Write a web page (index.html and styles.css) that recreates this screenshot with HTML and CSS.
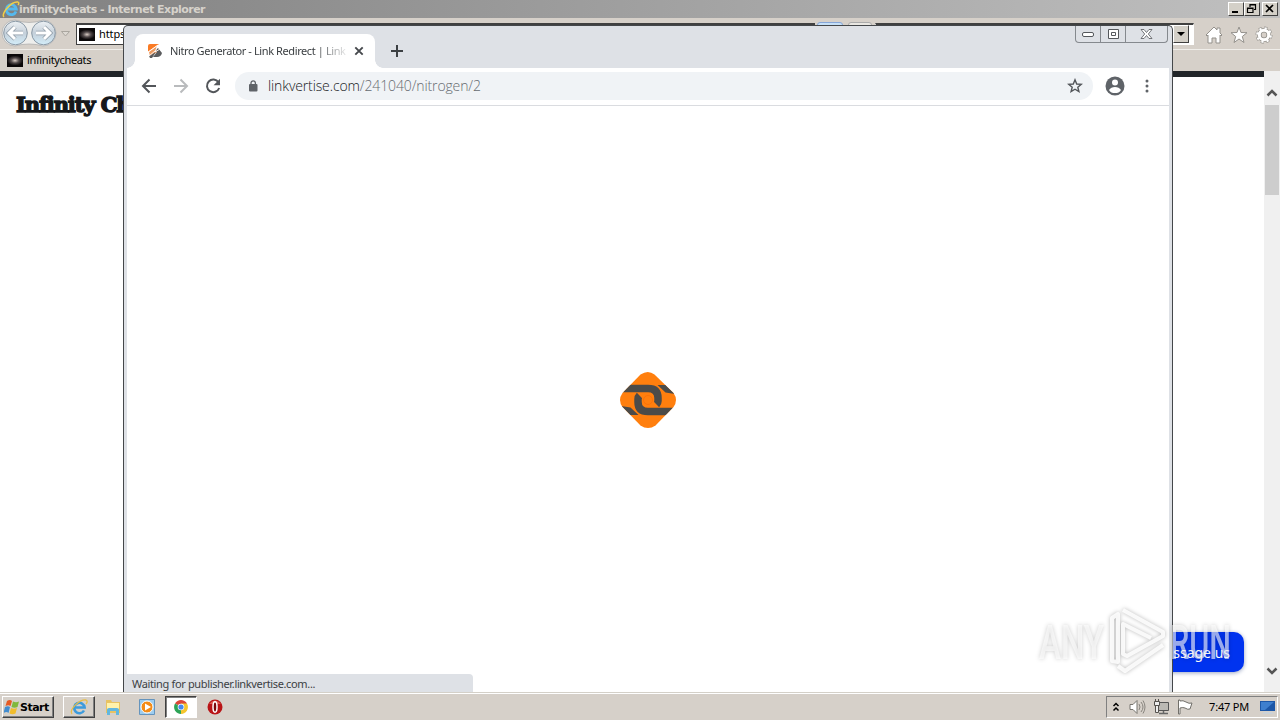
FILE: index.html
```
<!DOCTYPE html>
<html lang="en">
<head>
    <meta charset="utf-8">
    <title>Desktop</title>
    <link rel="stylesheet" href="styles.css">
</head>
<body>
    <div class="desktop">
        <!-- Internet Explorer -->
        <div class="ie">
            <div class="ie-title">
                <svg class="ie-logo" width="18" height="18" viewBox="0 0 18 18">
                    <path d="M14 11.500A5 5 0 1 1 14.300 9H5.500" fill="none" stroke="#55b9ee" stroke-width="2.800"/>
                    <path d="M2 17C-1 14 9 1 16 2c1 0 1 2 0 3" fill="none" stroke="#f3cf45" stroke-width="1.500"/>
                </svg>
                <span class="ie-title-text">infinitycheats - Internet Explorer</span>
                <div class="ie-controls">
                    <span class="win-btn"><svg width="14" height="12"><path d="M3 9h6" stroke="#000" stroke-width="2"/></svg></span>
                    <span class="win-btn"><svg width="14" height="12"><path d="M5 4V1.500h5.500v5H9M5 2h5.500M2.500 5h5.500v4.500H2.500zM2.500 5.500h5.500" fill="none" stroke="#000" stroke-width="1.200"/></svg></span>
                    <span class="win-btn close"><svg width="14" height="12"><path d="M3 2l7 7m0-7l-7 7" stroke="#000" stroke-width="1.700"/></svg></span>
                </div>
            </div>
            <div class="ie-nav">
                <svg width="74" height="30" viewBox="0 0 74 30">
                    <defs>
                        <linearGradient id="orb" x1="0" y1="0" x2="0" y2="1">
                            <stop offset="0" stop-color="#edf1f4"/>
                            <stop offset=".5" stop-color="#c5d0da"/>
                            <stop offset="1" stop-color="#d3edf9"/>
                        </linearGradient>
                    </defs>
                    <path d="M15 2q14 5 28 0a13 13 0 0 1 0 26q-14-4-28 0a13 13 0 0 1 0-26" fill="#eeeeec" stroke="#aaa" stroke-width=".7"/>
                    <circle cx="15.500" cy="15" r="11.800" fill="url(#orb)" stroke="#8998a5"/>
                    <circle cx="43.500" cy="15" r="11.800" fill="url(#orb)" stroke="#8998a5"/>
                    <path d="M23 15H9m6-6l-6 6 6 6M36 15h14m-6-6l6 6-6 6" fill="none" stroke="#8e9ba6" stroke-width="4.500"/>
                    <path d="M23 15H9m6-6l-6 6 6 6M36 15h14m-6-6l6 6-6 6" fill="none" stroke="#fff" stroke-width="3"/>
                    <path d="M61.500 13.500h8l-4 4.500z" fill="#ddd9d3" stroke="#aaa69f"/>
                </svg>
                <div class="ie-address">
                    <span class="galaxy"></span>
                    <span class="ie-url">https:</span>
                </div>
                <div class="ie-stubs"><i class="blue"></i><i></i></div>
                <div class="ie-search"><span class="drop"><svg width="12" height="12"><path d="M2 4h8L6 8z"/></svg></span></div>
                <div class="ie-tools">
                    <svg width="18" height="18" viewBox="0 0 18 18"><path d="M1 9l8-8 3 3V2h3v5l2 2-1 1-1-1v8h-4v-5H7v5H3V9l-1 1z" fill="#fff" stroke="#94918c"/></svg>
                    <svg width="18" height="18" viewBox="0 0 18 18"><path d="M9 1l2 5.500 6 .2-4.700 3.800 1.700 6L9 13l-5 3.500 1.700-6L1 6.700l6-.2z" fill="#fff" stroke="#94918c"/></svg>
                    <svg width="18" height="18" viewBox="0 0 18 18">
                        <circle cx="9" cy="9" r="6.800" fill="none" stroke="#94918c" stroke-width="3.400" stroke-dasharray="3 2.340"/>
                        <circle cx="9" cy="9" r="4.700" fill="none" stroke="#94918c" stroke-width="4.500"/>
                        <circle cx="9" cy="9" r="6.800" fill="none" stroke="#fff" stroke-width="2.200" stroke-dasharray="2.200 3.140" stroke-dashoffset="-.4"/>
                        <circle cx="9" cy="9" r="4.700" fill="none" stroke="#fff" stroke-width="3"/>
                    </svg>
                </div>
            </div>
            <div class="ie-tabs">
                <span class="galaxy"></span>
                <span class="ie-tab-text">infinitycheats</span>
            </div>
            <div class="ie-body">
                <div class="ie-page"><h1>Infinity Cheats</h1></div>
                <div class="scrollbar">
                    <svg width="16" height="34" viewBox="0 0 16 34"><path d="M3.500 24.500L8 20l4.500 4.500" fill="none" stroke="#555" stroke-width="2.500"/></svg>
                    <div class="thumb"></div>
                    <svg class="down" width="16" height="34" viewBox="0 0 16 34"><path d="M3.500 10.500L8 15l4.500-4.500" fill="none" stroke="#555" stroke-width="2.500"/></svg>
                </div>
            </div>
            <div class="message-btn">Message us</div>
        </div>

        <!-- Chrome -->
        <div class="chrome">
            <div class="tab-strip">
                <div class="tab">
                    <svg width="16" height="16" viewBox="0 0 16 16">
                        <path d="M1 3q0-2 2-2h9L1 9z" fill="#fa7b24"/>
                        <path d="M2 9l8-6-1 5 4-2v2L3 13z" fill="#ed9b61"/>
                        <path d="M9 7l2-2 4 5q-1 4-5 4H6l4-5zM2 13l7-4-4 6H3z" fill="#5b5c5e"/>
                        <path d="M1 9l10-7-3 7 5-3M2 13l6-5" fill="none" stroke="#fff" stroke-width=".9"/>
                    </svg>
                    <span class="tab-title">Nitro Generator - Link Redirect | Link</span>
                    <svg class="tab-close" width="10" height="10" viewBox="0 0 10 10"><path d="M1.300 1.300l7.400 7.400m0-7.400L1.300 8.700" stroke="#45484c" stroke-width="1.900"/></svg>
                </div>
                <svg class="new-tab" width="14" height="14" viewBox="0 0 14 14"><path d="M7 1v12M1 7h12" stroke="#3c4043" stroke-width="2"/></svg>
                <div class="chrome-controls">
                    <span><svg width="14" height="7"><rect x="1.500" y="1.500" width="11" height="4" rx="1.500" fill="#fff" stroke="#55585c"/></svg></span>
                    <span><svg width="13" height="11"><path d="M1.500.5h10v9h-10zM4.500 3.500h4v3h-4z" fill="#fff" stroke="#55585c"/></svg></span>
                    <span class="wide"><svg width="13" height="11"><path d="M1 .5h3l2.500 3L9 .5h3L8.300 5l3.700 4.500H9l-2.500-3-2.500 3H1L4.700 5z" fill="#fff" stroke="#55585c" stroke-width=".8"/></svg></span>
                </div>
            </div>
            <div class="toolbar">
                <svg width="16" height="16" viewBox="0 0 16 16"><path d="M15 8H2m6.500-6.500L2 8l6.500 6.500" fill="none" stroke="#53565a" stroke-width="2"/></svg>
                <svg width="16" height="16" viewBox="0 0 16 16"><path d="M1 8h13M7.500 1.500L14 8l-6.500 6.500" fill="none" stroke="#b9bbbd" stroke-width="2"/></svg>
                <svg width="16" height="16" viewBox="0 0 16 16"><path d="M13.500 4.300A6.300 6.300 0 1 0 14.200 10" fill="none" stroke="#53565a" stroke-width="2"/><path d="M15 .8v6.400H8.600z" fill="#53565a"/></svg>
                <div class="omnibox">
                    <svg width="10" height="12" viewBox="0 0 10 12"><rect x="1" y="4" width="8.500" height="7.500" rx="1" fill="#5f6368"/><path d="M3 5V3a2.200 2.200 0 0 1 4.400 0v2" fill="none" stroke="#5f6368" stroke-width="1.300"/></svg>
                    <span class="url"><b>linkvertise.com</b><i>/241040/nitrogen/2</i></span>
                    <svg class="star" width="16" height="16" viewBox="0 0 16 16"><path d="M8 1.800l1.700 4.200 4.600.3-3.500 2.900 1.100 4.400L8 11.200l-3.900 2.400 1.100-4.400-3.500-2.900L6.300 6z" fill="none" stroke="#53565a" stroke-width="1.400"/></svg>
                </div>
                <svg class="avatar" width="20" height="20" viewBox="0 0 20 20"><circle cx="10" cy="10" r="9.500" fill="#5f6368"/><circle cx="10" cy="6.600" r="3" fill="#fff"/><path d="M4 13.900q2-3 6-3t6 3q-2 3.200-6 3.200t-6-3.200" fill="#fff"/></svg>
                <svg class="menu" width="4" height="16"><circle cx="2" cy="3" r="1.500" fill="#5f6368"/><circle cx="2" cy="8" r="1.500" fill="#5f6368"/><circle cx="2" cy="13" r="1.500" fill="#5f6368"/></svg>
            </div>
            <div class="chrome-page">
                <svg class="loader" width="60" height="60" viewBox="0 0 60 60">
                    <defs>
                        <clipPath id="gem"><path d="M22.500 4.500q7.500-5 14 0l19 18.500q5 7 0 14L37.500 55.500q-7.500 5-15 0L4.500 37q-5-7 0-14z"/></clipPath>
                        <g id="link">
                            <path d="M0 18.500h30q10 0 10 9.500v3q0 2-1.500 3.500" fill="none" stroke="#4b4b49" stroke-width="7.500"/>
                            <path d="M39.500 15h8.500l9 9-9.500-1.500z" fill="#4b4b49"/>
                        </g>
                    </defs>
                    <g clip-path="url(#gem)">
                        <path d="M0 0h60v60H0z" fill="#ff7f0e"/>
                        <use href="#link"/>
                        <use href="#link" transform="rotate(180 30 30)"/>
                        <circle cx="30" cy="30" r="4.500" fill="none" stroke="#f9720a"/>
                    </g>
                </svg>
                <div class="status">Waiting for publisher.linkvertise.com...</div>
            </div>
        </div>

        <svg class="watermark" width="204" height="74" viewBox="0 0 204 74">
            <g fill="#fff" fill-opacity=".6">
                <text x="4" y="56" textLength="65" lengthAdjust="spacingAndGlyphs">ANY</text>
                <text x="135" y="56" textLength="61" lengthAdjust="spacingAndGlyphs">RUN</text>
            </g>
            <path d="M77 58V15l6-4v48zM88 7l40 22v4L92 53l-4-2V21l28 14M83 63l7 5 38-26" fill="none" stroke="#fff" stroke-opacity=".85" stroke-width="4" stroke-linejoin="round"/>
        </svg>

        <div class="taskbar">
            <div class="start">
                <svg width="16" height="16" viewBox="0 0 16 16"><path d="M3 2q3-2 5 0L6.500 7q-2-1.500-5 0z" fill="#e65a24"/><path d="M9 2.500q3 1.500 6 0L13.500 8q-3 1.500-6 0z" fill="#80b83d"/><path d="M1 8q3-1.500 5 0l-1.500 6q-2-2-5 0z" fill="#428ccf"/><path d="M7 9q3 1.500 6 0l-1.500 5.500q-3 1.500-6 0z" fill="#f1bd2d"/></svg>
                <span>Start</span>
            </div>
            <div class="task raised">
                <svg width="20" height="18" viewBox="0 0 20 18"><path d="M15 12.500a5.200 5.200 0 1 1 .6-3H6" fill="none" stroke="#3d9bdc" stroke-width="2.600"/><path d="M3 16C-1 12 11 1 17 2c2 1 1 3 0 4" fill="none" stroke="#e8bd45" stroke-width="1.300"/></svg>
            </div>
            <div class="task">
                <svg width="16" height="16" viewBox="0 0 16 16"><path d="M1 1h5l1 2h8v11H1z" fill="#e8c362"/><path d="M2 4h12v6H2z" fill="#fff2ab"/><path d="M2 16v-5q0-2 2-2h8q2 0 2 2v5h-3v-4H5v4z" fill="#62b7df"/></svg>
            </div>
            <div class="task">
                <svg width="16" height="16" viewBox="0 0 16 16"><path d="M.5.5h15v15H.5z" fill="#9ccdf0" stroke="#6594bd"/><circle cx="8" cy="8" r="6" fill="#f38c18" stroke="#fff"/><path d="M6 4.500l6 3.500-6 3.500z" fill="#fff"/></svg>
            </div>
            <div class="task pressed">
                <svg width="14" height="14" viewBox="0 0 14 14"><path d="M7 7L1 3.500a7 7 0 0 1 12 0z" fill="#dc4638"/><path d="M7 7L1 3.500A7 7 0 0 0 7 14z" fill="#2da457"/><path d="M7 7v7a7 7 0 0 0 6-10.500H7z" fill="#f5c52d"/><circle cx="7" cy="7" r="3.300" fill="#fff"/><circle cx="7" cy="7" r="2.600" fill="#4688ee"/></svg>
            </div>
            <div class="task">
                <svg width="16" height="16" viewBox="0 0 16 16"><circle cx="8" cy="8" r="7.500" fill="#b91417"/><path d="M2 5q6-7 12 0z" fill="#df5850"/><ellipse cx="8" cy="8" rx="2" ry="5.200" fill="#7b080b" stroke="#fff" stroke-width="1.500"/></svg>
            </div>
            <div class="tray">
                <svg width="8" height="10" viewBox="0 0 8 10"><path d="M1.500 4L4 1.500 6.500 4M1.500 8.500L4 6l2.500 2.500" fill="none" stroke="#000" stroke-width="1.500"/></svg>
                <svg class="speaker" width="17" height="16" viewBox="0 0 17 16"><path d="M1 5.500h3l4-4v13l-4-4H1z" fill="#fff" stroke="#77746e"/><path d="M10 5q2 3 0 6M12 3q4 5 0 10M14 1.500q4 6.500 0 13" fill="none" stroke="#88847e"/></svg>
                <svg class="network" width="17" height="16" viewBox="0 0 17 16"><path d="M5.500 3.500h10v8h-10z" fill="#bbb9b4" stroke="#555"/><path d="M6 14.500h9M10.500 12v2" stroke="#666" stroke-width="1.500"/><path d="M1.500 2.500h5v4h-5zM2.500 0v2M5.500 0v2M2.500 7v6.500h3V7" fill="#eee" stroke="#55524e"/></svg>
                <svg class="flag" width="17" height="16" viewBox="0 0 17 16"><path d="M1.500 1v14h1.500V9q3-1 5 0 3 2 5 1l2-6q-3 1-6-1Q6 1 3 2V1z" fill="#fff" stroke="#716f6a"/></svg>
                <span class="clock">7:47 PM</span>
                <svg width="16" height="14" viewBox="0 0 16 14"><path d="M0 1h15v10H0z" fill="#1d57a7"/><path d="M1 2h13l-9 8H1z" fill="#3e7fce"/><path d="M4 12h8l2 2H2z" fill="#cbd2d8"/></svg>
            </div>
        </div>
    </div>
</body>
</html>
```
FILE: styles.css
```
body {
    margin: 0;
    font-family: "Noto Sans", "DejaVu Sans", sans-serif;
    font-size: 11px;
    color: #000;
}
svg {
    display: block;
    flex-shrink: 0;
}
.desktop {
    position: relative;
    width: 1280px;
    height: 720px;
    overflow: hidden;
    display: flex;
    flex-direction: column;
    background: #d4d0c8;
}
/* Internet Explorer window */
.ie {
    position: relative;
    height: 692px;
    display: flex;
    flex-direction: column;
    background: #d6d0c9;
}
.ie-title {
    height: 18px;
    display: flex;
    align-items: center;
    padding: 0 2px;
    background: linear-gradient(to right, #808080, #c0c0c0);
}
.ie-title-text {
    font-family: "DejaVu Sans", sans-serif;
    font-weight: bold;
    font-size: 11px;
    letter-spacing: -0.53px;
    color: #d6d2cb;
    white-space: nowrap;
    margin-left: -1px;
}
.ie-controls {
    display: flex;
    margin-left: auto;
}
.win-btn {
    width: 14px;
    height: 12px;
    border: 1px solid;
    border-color: #fff #404040 #404040 #fff;
    background: #d4d0c8;
    overflow: hidden;
}
.win-btn.close {
    margin-left: 2px;
}
.ie-nav {
    height: 31px;
    display: flex;
    align-items: flex-start;
}
.ie-address {
    box-sizing: border-box;
    width: 739px;
    height: 22px;
    margin: 5px 0 0 2px;
    padding-left: 2px;
    border: 1px solid #404040;
    border-top-width: 2px;
    background: #fff;
    display: flex;
    align-items: center;
}
.galaxy {
    width: 16px;
    height: 13px;
    background: radial-gradient(ellipse 8px 5px at center, #d5c9c1, #51494a 50%, #0b0809 100%);
}
.ie-url {
    margin-left: 4px;
    margin-top: -2px;
    letter-spacing: -0.1px;
}
.ie-stubs {
    display: flex;
    gap: 5px;
    margin: 4px 0 0 2px;
}
.ie-stubs i {
    width: 22px;
    height: 20px;
    border: 1px solid #aaa;
    border-radius: 3px;
    background: #e9e7e2;
}
.ie-stubs .blue {
    width: 24px;
    border-color: #86a6d8;
    background: #c6e0f7;
}
.ie-search {
    box-sizing: border-box;
    width: 319px;
    height: 22px;
    margin: 5px 0 0 3px;
    border: 1px solid #fff;
    border-top: 2px solid #404040;
    background: #fff;
    display: flex;
    justify-content: flex-end;
}
.drop {
    width: 14px;
    height: 16px;
    margin-right: 4px;
    border: 1px solid;
    border-color: #fff #404040 #404040 #fff;
    background: #d4d0c8;
    display: flex;
    align-items: center;
    justify-content: center;
}
.ie-tools {
    display: flex;
    gap: 7px;
    margin: 8px 7px 0 auto;
}
.ie-tabs {
    height: 22px;
    display: flex;
    align-items: center;
    padding-left: 7px;
    border-top: 1px solid #f0eeea;
    box-sizing: border-box;
}
.ie-tab-text {
    margin-left: 4px;
    margin-top: -2px;
    letter-spacing: -0.36px;
}
.ie-body {
    flex: 1;
    display: flex;
}
.ie-page {
    flex: 1;
    border-top: 6px solid #212529;
    background: #fff;
}
.ie-page h1 {
    margin: 15px 0 0 16px;
    font-family: "DejaVu Serif", serif;
    font-size: 21px;
    line-height: 26px;
    letter-spacing: -1.1px;
    color: #16181b;
    -webkit-text-stroke: 1.4px #16181b;
}
.scrollbar {
    width: 16px;
    display: flex;
    flex-direction: column;
    background: #f0f0f0;
}
.thumb {
    height: 90px;
    margin: 0 1px;
    background: #cdcdcd;
}
.scrollbar .down {
    margin-top: auto;
}
.message-btn {
    position: absolute;
    right: 36px;
    bottom: 20px;
    height: 40px;
    padding: 0 14px 0 20px;
    border-radius: 10px;
    background: #0033ef;
    color: #fff;
    font-size: 14px;
    line-height: 42px;
    box-shadow: 0 1px 4px #9aa5c3;
}
/* Chrome window */
.chrome {
    position: absolute;
    left: 123px;
    top: 25px;
    box-sizing: border-box;
    width: 1050px;
    height: 667px;
    border: 1px solid #44474a;
    border-bottom: 0;
    border-radius: 5px 5px 0 0;
    padding: 0 3px;
    background: #dee1e6;
    display: flex;
    flex-direction: column;
}
.tab-strip {
    height: 42px;
    display: flex;
    padding-left: 8px;
}
.tab {
    position: relative;
    box-sizing: border-box;
    width: 240px;
    height: 34px;
    margin-top: 8px;
    padding: 0 11px 0 12px;
    border-radius: 8px 8px 0 0;
    background: #fff;
    display: flex;
    align-items: center;
}
.tab::before, .tab::after {
    content: "";
    position: absolute;
    bottom: 0;
    left: -8px;
    width: 8px;
    height: 8px;
    background: radial-gradient(circle at 0 0, transparent 7.5px, #fff 8px);
}
.tab::after {
    left: 240px;
    background: radial-gradient(circle at 100% 0, transparent 7.5px, #fff 8px);
}
.tab-title {
    width: 176px;
    margin-left: 7px;
    margin-top: -2px;
    overflow: hidden;
    white-space: nowrap;
    letter-spacing: -0.4px;
    color: #3c4043;
    -webkit-mask-image: linear-gradient(to right, #000 145px, transparent 180px);
}
.tab-close {
    margin-left: auto;
}
.new-tab {
    margin: 18px 0 0 15px;
}
.chrome-controls {
    display: flex;
    height: 16px;
    margin-left: auto;
    margin-right: 1px;
    border: 1px solid #85898e;
    border-top: 0;
    border-radius: 0 0 4px 4px;
}
.chrome-controls span {
    width: 24px;
    border-right: 1px solid #85898e;
    display: flex;
    align-items: center;
    justify-content: center;
}
.chrome-controls .wide {
    width: 41px;
    border-right: 0;
}
.toolbar {
    box-sizing: border-box;
    height: 38px;
    border-bottom: 1px solid #dadce0;
    padding: 0 20px 2px 14px;
    background: #fff;
    display: flex;
    align-items: center;
    gap: 16px;
}
.omnibox {
    box-sizing: border-box;
    width: 858px;
    height: 28px;
    margin-left: -2px;
    padding: 0 10px 0 13px;
    border-radius: 14px;
    background: #f0f3f6;
    display: flex;
    align-items: center;
}
.url {
    margin-left: 10px;
    font-family: "Open Sans", sans-serif;
    font-weight: 300;
    font-size: 14px;
    letter-spacing: -0.12px;
    color: #666b70;
}
.url b, .url i {
    font-weight: 300;
    font-style: normal;
}
.url b {
    color: #17191c;
}
.star {
    margin-left: auto;
}
.avatar {
    margin-left: -4px;
}
.menu {
    margin-left: auto;
}
.chrome-page {
    flex: 1;
    position: relative;
    background: #fff;
    display: flex;
    flex-direction: column;
    justify-content: center;
    align-items: center;
}
.loader {
    margin-top: 2px;
}
.status {
    position: absolute;
    left: 0;
    bottom: 0;
    box-sizing: border-box;
    width: 346px;
    height: 18px;
    padding-left: 5px;
    line-height: 20px;
    border-radius: 0 4px 0 0;
    background: #dee1e6;
    color: #3c4043;
    letter-spacing: -0.35px;
}
/* overlay mark */
.watermark {
    position: absolute;
    left: 1035px;
    top: 603px;
    font-family: Roboto, sans-serif;
    font-size: 49px;
    font-weight: 500;
    filter: drop-shadow(0 0 2px rgba(0, 0, 0, 0.32));
}
/* Taskbar */
.taskbar {
    box-sizing: border-box;
    height: 28px;
    border-top: 1px solid #d4d0c8;
    box-shadow: inset 0 1px #fff;
    padding: 3px 2px 2px;
    background: #d6d0c9;
    display: flex;
}
.start {
    box-sizing: border-box;
    width: 52px;
    height: 22px;
    border: 1px solid;
    border-color: #fff #404040 #404040 #fff;
    box-shadow: inset -1px -1px #808080;
    padding-left: 1px;
    display: flex;
    align-items: center;
    font-family: "DejaVu Sans", sans-serif;
    font-weight: bold;
    font-size: 11px;
    letter-spacing: -0.5px;
}
.start + .task {
    margin-left: 9px;
}
.task {
    box-sizing: border-box;
    width: 32px;
    height: 22px;
    margin-right: 2px;
    display: flex;
    align-items: center;
    justify-content: center;
}
.raised {
    border: 1px solid;
    border-color: #fff #404040 #404040 #fff;
    box-shadow: inset -1px -1px #808080;
}
.pressed {
    border: 1px solid;
    border-color: #404040 #fff #fff #404040;
    box-shadow: inset 1px 1px #808080;
    background: #fff;
}
.tray {
    box-sizing: border-box;
    width: 172px;
    height: 22px;
    margin-left: auto;
    border: 1px solid;
    border-color: #808080 #fff #fff #808080;
    padding: 0 1px 0 5px;
    display: flex;
    align-items: center;
}
.speaker {
    margin-left: 9px;
}
.network {
    margin-left: 7px;
}
.flag {
    margin-left: 7px;
}
.clock {
    margin-left: auto;
    margin-right: 11px;
    margin-top: -2px;
    letter-spacing: -0.2px;
}
```
